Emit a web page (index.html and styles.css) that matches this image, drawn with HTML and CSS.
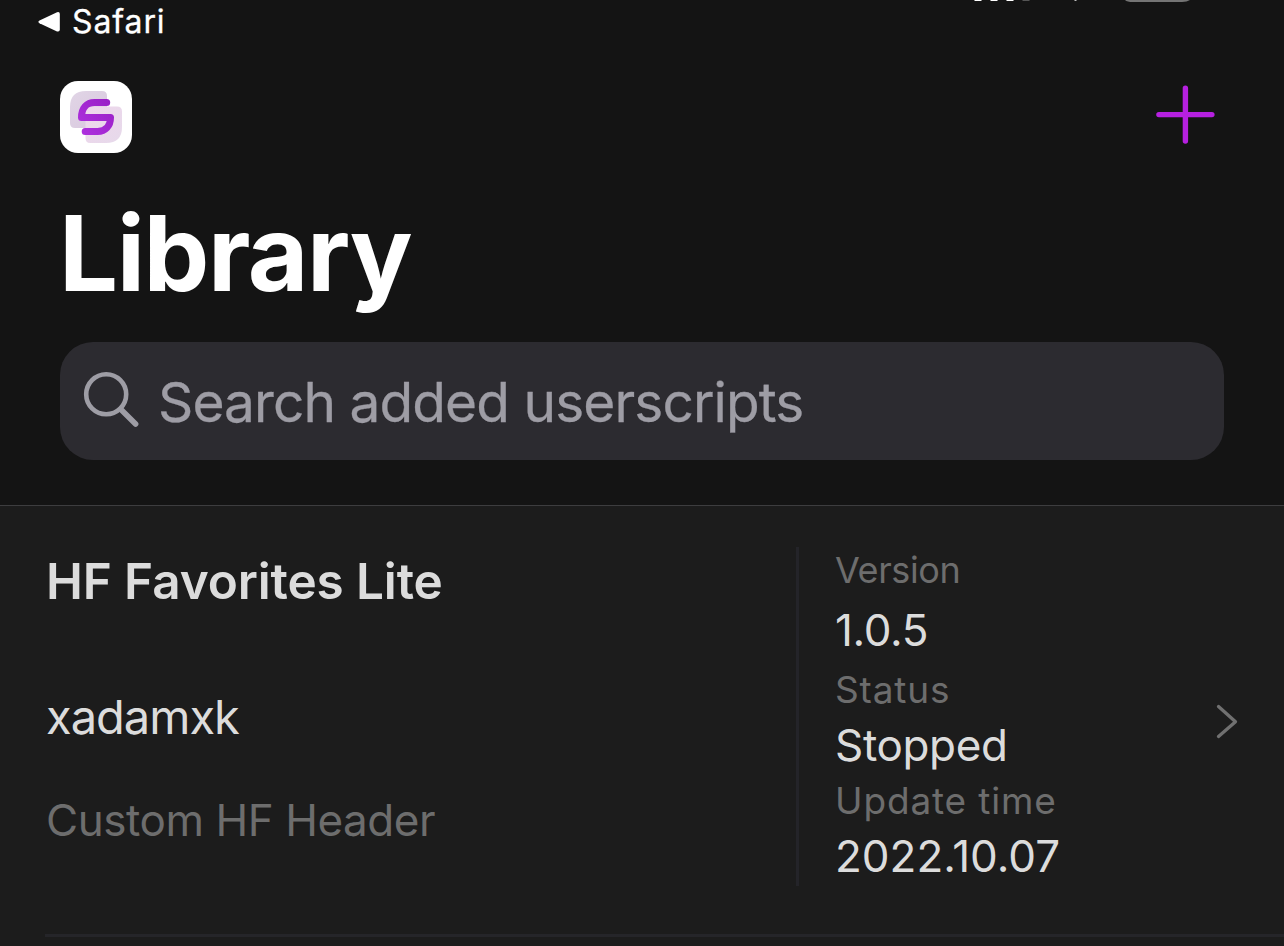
FILE: index.html
```html
<!DOCTYPE html>
<html lang="en">
<head>
<meta charset="utf-8">
<title>Library</title>
<link rel="stylesheet" href="styles.css">
</head>
<body>
<header class="header">
  <div class="statusbar">
    <a class="back">
      <svg class="back-icon" width="22" height="22" viewBox="0 0 22 22"><path d="M1.500 9.400 19 1.200Q21.800 .3 21.800 3V18.500Q21.800 21.200 19 20.400L1.500 12.200Q-.8 10.800 1.500 9.400Z" fill="#fff"/></svg>
      <span class="back-label">Safari</span>
    </a>
    <svg class="signals" width="224" height="3" viewBox="0 0 224 3">
      <path d="M2 0h8l-1 1H3zM18 0h8l-1 1h-6zM34 0h8l-1 1h-6z" fill="#fff"/>
      <path d="M50 0h8l-1 1h-6z" fill="#555"/>
      <path d="M102.500 0h2v1h-2z" fill="#bbb"/>
      <path d="M153 0h65q-3 2-8 2h-49q-6 0-8-2z" fill="#747474"/>
    </svg>
  </div>
  <div class="toolbar">
    <svg class="logo" width="72" height="72" viewBox="0 0 72 72">
      <defs>
        <linearGradient id="back-plate" x1="0" y1="0" x2="1" y2="1"><stop offset="0" stop-color="#e1d5e6"/><stop offset="1" stop-color="#d8c8de"/></linearGradient>
        <linearGradient id="front-plate" x1="0" y1="0" x2="1" y2="1"><stop offset="0" stop-color="#efd7ec"/><stop offset="1" stop-color="#e6d9ea"/></linearGradient>
        <linearGradient id="mark" x1="0" y1="1" x2="1" y2="0"><stop offset="0" stop-color="#ad2fdd"/><stop offset="1" stop-color="#9a20c7"/></linearGradient>
      </defs>
      <rect width="72" height="72" rx="18" fill="#fff"/>
      <path d="M26 10H42Q47 10 47 15V42Q47 47 42 47H15Q10 47 10 42V26Q10 10 26 10Z" fill="url(#back-plate)"/>
      <path d="M30 25.500H57Q62 25.500 62 30.500V46Q62 62 46 62H30Q25.500 62 25.500 57V30Q25.500 25.500 30 25.500Z" fill="url(#front-plate)"/>
      <path d="M46.700 21.500H34.500C26.500 21.500 21.500 27.500 21.500 36.500H50.500C50.500 45 45.500 50.500 37.500 50.500H25.200" fill="none" stroke="url(#mark)" stroke-width="7" stroke-linecap="round" stroke-linejoin="round"/>
    </svg>
    <svg class="add" width="60" height="60" viewBox="0 0 60 60"><path d="M3.900 29.600H56.900M30.400 3.100V56.100" stroke="#b620e0" stroke-width="5.400" stroke-linecap="round"/></svg>
  </div>
  <h1 class="title">Library</h1>
  <div class="search">
    <svg class="search-icon" width="56" height="56" viewBox="0 0 56 56"><g fill="none" stroke="#9e9da5" stroke-linecap="round"><circle cx="23.200" cy="23.200" r="20" stroke-width="4.600"/><path d="M38 38.500 52.600 53" stroke-width="5.600"/></g></svg>
    <span class="placeholder">Search added userscripts</span>
  </div>
</header>
<main class="list">
  <article class="script">
    <section class="summary">
      <h2 class="name">HF Favorites Lite</h2>
      <div class="author">xadamxk</div>
      <div class="description">Custom HF Header</div>
    </section>
    <dl class="details">
      <dt class="label version">Version</dt><dd class="value v1">1.0.5</dd>
      <dt class="label">Status</dt><dd class="value">Stopped</dd>
      <dt class="label">Update time</dt><dd class="value date">2022.10.07</dd>
    </dl>
    <svg class="chevron" width="24" height="36" viewBox="0 0 24 36"><path d="M2.500 2.500 19.500 17.700 2.500 32.500" fill="none" stroke="#707070" stroke-width="3.300" stroke-linecap="round" stroke-linejoin="round"/></svg>
  </article>
</main>
</body>
</html>
```
FILE: styles.css
```css
* { box-sizing: border-box; margin: 0; padding: 0; }
body { width: 1284px; height: 946px; overflow: hidden; background: #1c1c1c; font-family: Inter, "Liberation Sans", sans-serif; white-space: nowrap; }
svg { display: block; flex: none; overflow: visible; }
.header { height: 506px; background: #141414; border-bottom: 1px solid #3d3d3f; }
.statusbar { height: 81px; padding: 0 60px 0 38px; display: flex; justify-content: space-between; align-items: flex-start; }
.back { height: 43px; display: flex; align-items: center; gap: 12px; color: #fff; }
.back-label { font-size: 32px; line-height: 42px; letter-spacing: 0.9px; -webkit-text-stroke: 0.3px #fff; }
.signals { margin-right: 28px; }
.toolbar { height: 112px; padding: 0 69px 0 60px; display: flex; justify-content: space-between; align-items: flex-start; }
.add { margin-top: 4px; }
.title { height: 149px; padding-left: 59px; font-size: 104.500px; line-height: 121px; letter-spacing: -1.4px; font-weight: 700; color: #fff; }
.search { height: 118px; margin: 0 60px; padding-left: 23px; border-radius: 33px; background: #2c2b30; display: flex; align-items: center; gap: 19px; color: #9e9da5; }
.search-icon { margin-bottom: 4px; }
.placeholder { font-size: 55px; line-height: 118px; margin-top: 2px; letter-spacing: -0.91px; -webkit-text-stroke: 0.3px #9e9da5; }
.script { height: 431px; margin-left: 45px; border-bottom: 3px solid #252529; display: flex; }
.summary { width: 751px; padding-top: 35px; padding-left: 1px; color: #dcdcdc; }
.name { font-size: 49.500px; line-height: 80px; letter-spacing: -0.12px; font-weight: 600; }
.author { font-size: 47px; line-height: 60px; margin-top: 66px; letter-spacing: -1px; }
.description { font-size: 44px; line-height: 60px; margin-top: 43px; letter-spacing: -0.45px; color: #6d6d6d; }
.details { width: 412px; height: 339px; margin-top: 41px; padding-left: 36px; border-left: 3px solid #242429; }
.label { font-size: 37px; color: #6d6d6d; line-height: 44px; letter-spacing: 0.85px; }
.value { font-size: 44px; color: #dcdcdc; line-height: 67px; letter-spacing: -0.35px; }
.version { font-size: 36px; line-height: 46px; letter-spacing: -0.4px; padding-bottom: 4px; }
.v1 { padding-bottom: 4px; }
.date { letter-spacing: 0; }
.chevron { margin: 198px 0 0 8px; }
```
